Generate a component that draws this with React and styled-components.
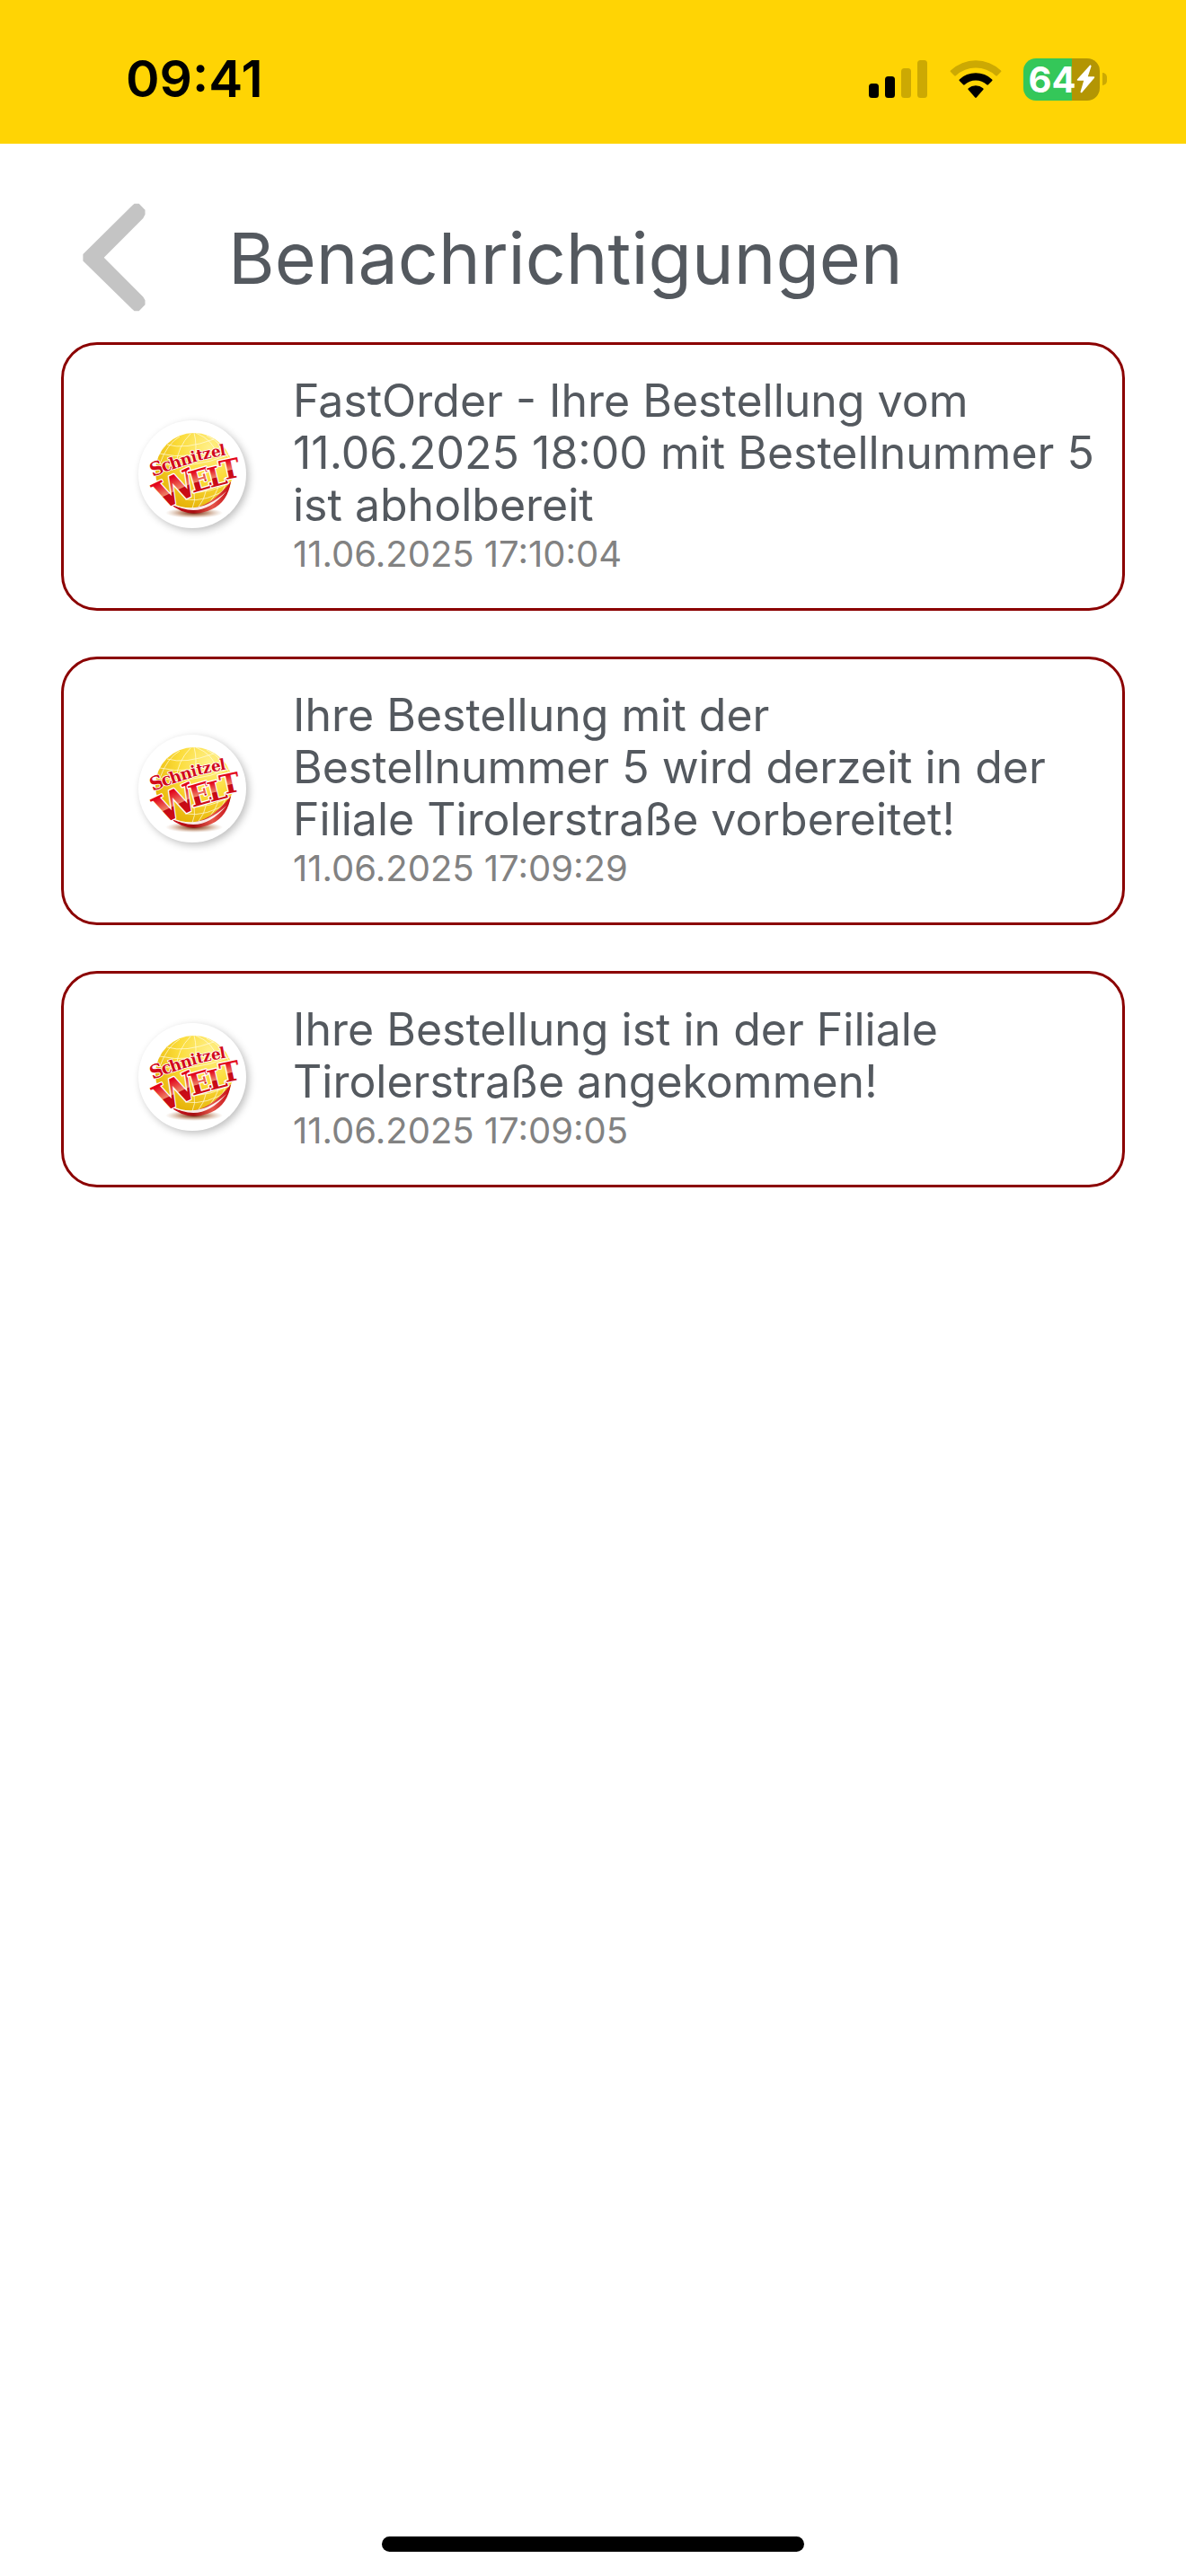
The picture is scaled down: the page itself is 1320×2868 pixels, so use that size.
import React, { useId } from 'react';
import styled, { createGlobalStyle, ThemeProvider } from 'styled-components';

const theme = {
  colors: {
    yellow: '#ffd404',
    white: '#fff',
    black: '#000',
    slate: '#54595f',
    gray: '#828282',
    silver: '#c4c4c4',
    darkRed: '#8b0000',
    green: '#34c759',
    olive: '#b39503',
    dimmed: '#cca903',
  },
  fonts: {
    base: 'Inter, "Liberation Sans", sans-serif',
  },
};

const notifications = [
  {
    id: 1,
    text: 'FastOrder - Ihre Bestellung vom 11.06.2025 18:00 mit Bestellnummer 5 ist abholbereit',
    date: '11.06.2025 17:10:04',
  },
  {
    id: 2,
    text: 'Ihre Bestellung mit der Bestellnummer 5 wird derzeit in der Filiale Tirolerstraße vorbereitet!',
    date: '11.06.2025 17:09:29',
  },
  {
    id: 3,
    text: 'Ihre Bestellung ist in der Filiale Tirolerstraße angekommen!',
    date: '11.06.2025 17:09:05',
  },
];

const SignalIcon = () => (
  <svg width="66" height="42" viewBox="0 0 66 42" aria-hidden="true">
    <rect x="0" y="26" width="11" height="16" rx="3.5" fill={theme.colors.black} />
    <rect x="18" y="18" width="11" height="24" rx="3.5" fill={theme.colors.black} />
    <rect x="36" y="9" width="11" height="33" rx="3.5" fill={theme.colors.dimmed} />
    <rect x="54" y="0" width="11" height="42" rx="3.5" fill={theme.colors.dimmed} />
  </svg>
);

const WifiIcon = () => (
  <svg width="58" height="42" viewBox="0 0 58 42" aria-hidden="true">
    <path d="M1 11.5a40.5 40.5 0 0 1 56 0q.8.8 0 1.600l-4.200 4.200q-.8.8-1.600 0a32.500 32.500 0 0 0-44.400 0q-.8.8-1.600 0L1 13.100q-.8-.8 0-1.600z" fill={theme.colors.dimmed} />
    <path d="M10.800 21.400a26.500 26.500 0 0 1 36.400 0q.8.8 0 1.600l-4.300 4.300q-.8.8-1.600 0a18.200 18.200 0 0 0-24.600 0q-.8.8-1.600 0L10.800 23q-.8-.8 0-1.600z" fill={theme.colors.black} />
    <path d="M20.800 31.300a12.400 12.400 0 0 1 16.400 0q.8.8 0 1.700l-7.400 8.500q-.8.8-1.600 0L20.800 33q-.8-.9 0-1.700z" fill={theme.colors.black} />
  </svg>
);

const BoltIcon = () => (
  <svg width="21" height="32" viewBox="0 0 21 32" aria-hidden="true">
    <path d="M15.200.6 1 16.200q-1 1.400.6 1.600h6.600L4.600 30q-.2 2 1.600 1L20 14.800q1-1.400-.6-1.600h-6.600L16.500 2q.2-2-1.300-1.400z" fill={theme.colors.white} />
  </svg>
);

const BackIcon = () => (
  <svg width="70" height="121" viewBox="0 0 70 121" aria-hidden="true">
    <path d="M.4 57 55 3l2.500-2.200h5.200l6.800 7v5L67.300 17 23.700 60.800 67.300 104.500l2.200 3.800v5l-6.800 6.900h-5.200L55 118 .4 64.500z" fill={theme.colors.silver} />
  </svg>
);

// every letter of the logo gets its own size and tilt, they shrink towards the right
const schnitzel = [
  ['S', 16, 63, 21, -22],
  ['c', 28, 58, 19, -21],
  ['h', 37, 55, 18, -19],
  ['n', 48.5, 51, 18, -17],
  ['i', 60, 47, 17, -15],
  ['t', 66, 45, 17, -13],
  ['z', 72.5, 43.5, 17, -12],
  ['e', 82, 41.5, 17, -11],
  ['l', 91.5, 39.5, 17, -10],
];
const welt = [
  ['W', 26, 100, 42, -25],
  ['E', 60, 81, 33, -16],
  ['L', 80, 75, 30, -14],
  ['T', 93, 67, 30, -12],
];

const Logo = () => {
  const id = useId();
  const ref = (name) => `url(#${id}${name})`;

  return (
    <Disc viewBox="0 0 120 120" role="img" aria-label="Schnitzel Welt">
      <defs>
        <radialGradient id={`${id}globe`} cx="0.7" cy="0.2" r="0.9">
          <stop offset="0" stopColor="#fff08a" />
          <stop offset="0.45" stopColor="#fbdc3a" />
          <stop offset="1" stopColor="#e3ac00" />
        </radialGradient>
        <radialGradient id={`${id}ground`}>
          <stop offset="0" stopColor="#6b1c08" />
          <stop offset="0.5" stopColor="#a5643c" stopOpacity="0.6" />
          <stop offset="1" stopColor="#c9a080" stopOpacity="0" />
        </radialGradient>
        <linearGradient id={`${id}red`} x1="0" y1="0" x2="0" y2="1">
          <stop offset="0.2" stopColor="#e2001a" />
          <stop offset="0.52" stopColor="#ee8064" />
          <stop offset="0.54" stopColor="#c40a14" />
          <stop offset="1" stopColor="#d80f1c" />
        </linearGradient>
        <linearGradient id={`${id}band`} x1="0" y1="0" x2="1" y2="0">
          <stop offset="0" stopColor="#d3101c" />
          <stop offset="0.4" stopColor="#a80f12" />
          <stop offset="0.7" stopColor="#e5564a" />
          <stop offset="1" stopColor="#c40a14" />
        </linearGradient>
      </defs>
      <ellipse cx="62" cy="103" rx="32" ry="6" fill={ref('ground')} />
      <circle cx="62" cy="57" r="43" fill={ref('globe')} />
      <g fill="none" stroke="#fffbe0" strokeWidth="0.8" opacity="0.9">
        <path d="M32 27q20 6 52-6M24 37q32 8 70-8M20 48q36 8 82-10M46 18q-14 8-22 30M58 15q-14 14-16 34M62 14q4 14 0 32M64 14q20 8 24 26M76 17q18 8 26 28" />
        <path d="M62 80q2 10-2 18M76 76q-2 12-10 22M90 70q-4 16-14 24M100 62q-4 16-14 28M52 88q24 4 50-14M56 80q24 2 48-12" />
      </g>
      <path d="M34 92q34 20 69-24q-4 26-26 33q-24 8-43-9z" fill={ref('band')} />
      <path d="M36 92q32 15 62-13q-28 34-62 13z" fill="#fff" opacity="0.9" />
      <g fontFamily='"DejaVu Serif", "Liberation Serif", serif' fontWeight="700" stroke="#fff" strokeLinejoin="round" paintOrder="stroke">
        {schnitzel.map(([letter, x, y, size, tilt]) => (
          <text key={x} x={x} y={y} fontSize={size} strokeWidth="1.6" fill="#d20a1a" transform={`rotate(${tilt} ${x} ${y})`}>{letter}</text>
        ))}
        {welt.map(([letter, x, y, size, tilt]) => (
          <text key={x} x={x} y={y} fontSize={size} strokeWidth="2.4" fill={ref('red')} transform={`rotate(${tilt} ${x} ${y})`}>{letter}</text>
        ))}
      </g>
    </Disc>
  );
};

const Notification = ({ item }) => (
  <Card>
    <Logo />
    <Content>
      <Message>{item.text}</Message>
      <Time>{item.date}</Time>
    </Content>
  </Card>
);

const App = () => (
  <ThemeProvider theme={theme}>
    <GlobalStyle />
    <Page>
      <StatusBar>
        <Clock>09:41</Clock>
        <StatusIcons>
          <SignalIcon />
          <WifiIcon />
          <Battery>
            <Charge>
              64
              <BoltIcon />
            </Charge>
            <Nub />
          </Battery>
        </StatusIcons>
      </StatusBar>
      <Header>
        <BackButton type="button" aria-label="Zurück">
          <BackIcon />
        </BackButton>
        <Title>Benachrichtigungen</Title>
      </Header>
      <List>
        {notifications.map((item) => <Notification key={item.id} item={item} />)}
      </List>
      <HomeIndicator />
    </Page>
  </ThemeProvider>
);

const GlobalStyle = createGlobalStyle`
  * {
    box-sizing: border-box;
    margin: 0;
    padding: 0;
  }

  body {
    background-color: ${({ theme }) => theme.colors.white};
    font-family: ${({ theme }) => theme.fonts.base};
  }
`;
const Page = styled.div`
  display: flex;
  flex-direction: column;
  min-height: 100vh;
`;
const StatusBar = styled.div`
  align-items: center;
  background-color: ${({ theme }) => theme.colors.yellow};
  display: flex;
  height: 160px;
  justify-content: space-between;
  padding: 16px 88px 0 140px;
`;
const Clock = styled.time`
  color: ${({ theme }) => theme.colors.black};
  font-size: 57px;
  font-weight: 600;
  line-height: 64px;
`;
const StatusIcons = styled.div`
  align-items: center;
  display: flex;
  gap: 24px;
`;
const Battery = styled.div`
  align-items: center;
  display: flex;
  gap: 3px;
`;
const Charge = styled.div`
  align-items: center;
  background: linear-gradient(to right, ${({ theme }) => theme.colors.green} 64%, ${({ theme }) => theme.colors.olive} 64%);
  border-radius: 14px;
  color: ${({ theme }) => theme.colors.white};
  display: flex;
  font-size: 40px;
  font-weight: 700;
  height: 47px;
  justify-content: center;
  width: 85px;
`;
const Nub = styled.span`
  background-color: ${({ theme }) => theme.colors.dimmed};
  border-radius: 0 5px 5px 0;
  height: 14px;
  width: 5px;
`;
const Header = styled.header`
  align-items: center;
  display: flex;
  gap: 92px;
  padding: 66px 68px 34px 92px;
`;
const BackButton = styled.button`
  background: none;
  border: 0;
  cursor: pointer;
  display: flex;
`;
const Title = styled.h1`
  color: ${({ theme }) => theme.colors.slate};
  font-size: 79px;
  font-weight: 400;
  line-height: 96px;
`;
const List = styled.ul`
  display: flex;
  flex-direction: column;
  gap: 51px;
  list-style: none;
  padding: 0 68px;
`;
const Card = styled.li`
  align-items: center;
  border: 3px solid ${({ theme }) => theme.colors.darkRed};
  border-radius: 40px;
  display: flex;
  gap: 52px;
  padding: 33px 30px 34px 83px;
`;
const Disc = styled.svg`
  background-color: ${({ theme }) => theme.colors.white};
  border-radius: 50%;
  box-shadow: 3px 3px 8px rgba(0, 0, 0, .25);
  flex-shrink: 0;
  height: 120px;
  margin-bottom: 4px;
  width: 120px;
`;
const Content = styled.div`
  flex: 1;
`;
const Message = styled.p`
  color: ${({ theme }) => theme.colors.slate};
  font-size: 50px;
  line-height: 58px;
`;
const Time = styled.time`
  color: ${({ theme }) => theme.colors.gray};
  display: block;
  font-size: 40px;
  line-height: 52px;
`;
const HomeIndicator = styled.div`
  align-self: center;
  background-color: ${({ theme }) => theme.colors.black};
  border-radius: 9px;
  height: 17px;
  margin: auto 0 27px;
  width: 470px;
`;

export default App;
